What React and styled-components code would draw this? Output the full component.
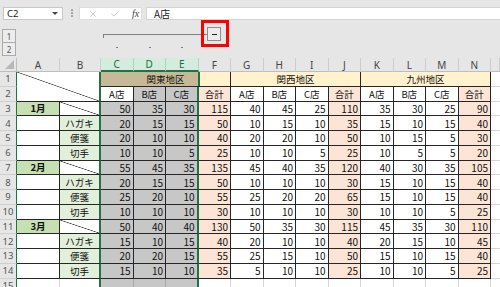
import React from 'react';
import styled, { createGlobalStyle, css } from 'styled-components';
import { X, Check } from 'lucide-react';

const GREEN = '#217346';
const LINE = '#262626';
const GRID = '#d6d6d6';
const SEL = '#c7c7c7';
const PEACH = '#fce4d6';
const YELLOW = '#fff2cc';
const TAN = '#c6b996';
const MONTH = '#c6e0b4';
const LABEL = '#e2efda';
const CHROME = '#e6e6e6';
const COLS = '17px 43px 41px repeat(12, 32.5px) 1fr';

const GlobalStyle = createGlobalStyle`
  html, body { margin: 0; padding: 0; }
  body {
    width: 500px;
    height: 287px;
    overflow: hidden;
    background: ${CHROME};
    font-family: "Noto Sans CJK JP", "Noto Sans", sans-serif;
  }
`;

const Frame = styled.div`
  display: flex;
  flex-direction: column;
  height: 287px;
  overflow: hidden;
`;

// formula bar
const FormulaRow = styled.div`
  display: flex;
  align-items: flex-start;
  height: 22px;
  flex: none;
  box-sizing: border-box;
  padding: 7px 0 0 3px;
`;

const NameBox = styled.div`
  width: 60px;
  height: 13px;
  box-sizing: border-box;
  border: 1px solid #c8c8c8;
  background: #fff;
  display: flex;
  align-items: center;
  justify-content: space-between;
  padding: 0 4px 0 3px;
  font-family: "Noto Sans", sans-serif;
  font-size: 9.5px;
  color: #222;
`;

const Caret = styled.span`
  width: 0;
  height: 0;
  border-left: 3px solid transparent;
  border-right: 3px solid transparent;
  border-top: 3px solid #444;
`;

const Grip = styled.div`
  width: 2px;
  height: 8px;
  margin: 2px 6px 0 8px;
  background: repeating-linear-gradient(to bottom, #a6a6a6 0 2px, transparent 2px 3px);
`;

const IconBox = styled.div`
  width: 63px;
  height: 13px;
  box-sizing: border-box;
  background: #fff;
  border: 1px solid #dcdcdc;
  display: flex;
  align-items: center;
  gap: 12px;
  padding-left: 8px;
  color: #a8a8a8;
`;

const Fx = styled.span`
  font-family: "Liberation Serif", serif;
  font-style: italic;
  font-size: 10px;
  color: #444;
`;

const FormulaBox = styled.div`
  flex: 1;
  height: 13px;
  margin-left: 4px;
  box-sizing: border-box;
  background: #fff;
  border: 1px solid #d4d4d4;
  border-right: none;
  display: flex;
  align-items: center;
  padding-left: 7px;
  font-size: 10px;
  color: #222;
`;

// outline (group) bar
const OutlineBar = styled.div`
  display: grid;
  grid-template-columns: ${COLS};
  height: 36px;
  flex: none;
`;

const LevelStack = styled.div`
  display: flex;
  flex-direction: column;
  padding: 7px 0 0 2px;
`;

const LevelButton = styled.div`
  width: 14px;
  height: 14px;
  box-sizing: border-box;
  border: 1px solid #ababab;
  background: #ececec;
  display: flex;
  align-items: center;
  justify-content: center;
  font-family: "Noto Sans", sans-serif;
  font-size: 8px;
  color: #555;
  & + & { margin-top: -1px; }
`;

const Spacer = styled.div`
  grid-column: span ${p => p.$span || 1};
`;

const GroupArea = styled.div`
  grid-column: span 4;
  display: flex;
  flex-direction: column;
`;

const GroupTop = styled.div`
  display: flex;
  align-items: flex-start;
  height: 25px;
  padding-left: 2px;
`;

const GroupLine = styled.div`
  flex: 1;
  height: 1px;
  margin-top: 12px;
  background: #808080;
  position: relative;
  &::before {
    content: '';
    position: absolute;
    left: 0;
    top: 0;
    width: 1px;
    height: 4px;
    background: #808080;
  }
`;

const CollapseButton = styled.div`
  position: relative;
  flex: none;
  width: 14px;
  height: 14px;
  margin: 5px 10px 0 0;
  box-sizing: border-box;
  border: 1px solid #8e8e8e;
  background: #ededed;
  display: flex;
  align-items: center;
  justify-content: center;
  &::after {
    content: '';
    width: 5px;
    height: 1px;
    background: #222;
  }
`;

const Highlight = styled.div`
  position: absolute;
  left: -7px;
  top: -8px;
  right: -9px;
  bottom: -7px;
  border: 3px solid #ff0000;
  pointer-events: none;
`;

const DotRow = styled.div`
  display: grid;
  grid-template-columns: repeat(3, 32.5px);
`;

const Dot = styled.span`
  justify-self: center;
  width: 2px;
  height: 1px;
  background: #7a7a7a;
`;

// sheet grid
const Sheet = styled.div`
  display: grid;
  grid-template-columns: ${COLS};
  grid-template-rows: 14px repeat(15, 14.75px);
  background: #fff;
  font-size: 10px;
  color: #111;
`;

const Corner = styled.div`
  position: relative;
  background: ${CHROME};
  border-right: 1px solid #bdbdbd;
  border-bottom: 1px solid #bdbdbd;
  &::after {
    content: '';
    position: absolute;
    right: 2px;
    bottom: 2px;
    border-left: 9px solid transparent;
    border-bottom: 9px solid #b8b8b8;
  }
`;

const ColHeader = styled.div`
  display: flex;
  align-items: center;
  justify-content: center;
  box-sizing: border-box;
  background: ${p => (p.$sel ? '#d3ecdd' : CHROME)};
  color: ${p => (p.$sel ? '#1d6b3e' : '#444')};
  border-right: 1px solid ${p => (p.$sel ? '#a9d8bd' : '#cdcdcd')};
  border-bottom: ${p => (p.$sel ? `2px solid ${GREEN}` : '1px solid #bdbdbd')};
  font-family: "Noto Sans", sans-serif;
  font-size: 10px;
`;

const RowHeader = styled.div`
  display: flex;
  align-items: center;
  justify-content: center;
  box-sizing: border-box;
  background: ${CHROME};
  color: #555;
  border-right: 1px solid ${GREEN};
  border-bottom: 1px solid #cfcfcf;
  font-family: "Noto Sans", sans-serif;
  font-size: 9.5px;
`;

const Cell = styled.div`
  grid-column: span ${p => p.$span || 1};
  grid-row: span ${p => p.$rows || 1};
  display: flex;
  align-items: center;
  justify-content: ${p => (p.$num ? 'flex-end' : 'center')};
  box-sizing: border-box;
  min-width: 0;
  overflow: hidden;
  white-space: nowrap;
  padding: 0 2px;
  font-size: ${p => (p.$num ? '10px' : '9.5px')};
  background-color: ${p => p.$bg || '#fff'};
  border-right: ${p => (p.$edge ? `2px solid ${GREEN}` : `1px solid ${p.$rc || LINE}`)};
  border-bottom: 1px solid ${p => p.$bc || LINE};
  font-weight: ${p => (p.$bold ? 700 : 400)};
  ${p => p.$diag && css`
    background-image: linear-gradient(to top right, transparent calc(50% - 0.7px), #4a4a4a 50%, transparent calc(50% + 0.7px));
  `}
`;

const RegionCell = styled(Cell)`
  background: ${p => (p.$tint
    ? `linear-gradient(${GREEN}, ${GREEN}) 97px 0 / 2px 100% no-repeat, linear-gradient(to right, ${TAN} 98px, ${YELLOW} 98px)`
    : YELLOW)};
`;

const Filler = styled.div`
  background: #fff;
  border-bottom: 1px solid ${GRID};
`;

const LETTERS = ['A', 'B', 'C', 'D', 'E', 'F', 'G', 'H', 'I', 'J', 'K', 'L', 'M', 'N'];
const ITEMS = ['ハガキ', '便箋', '切手'];
const DATA = [
  [50, 35, 30, 115, 40, 45, 25, 110, 35, 30, 25, 90],
  [20, 15, 15, 50, 10, 15, 10, 35, 15, 10, 15, 40],
  [20, 10, 10, 40, 20, 20, 10, 50, 10, 15, 5, 30],
  [10, 10, 5, 25, 10, 10, 5, 25, 10, 5, 5, 20],
  [55, 45, 35, 135, 45, 40, 35, 120, 40, 30, 35, 105],
  [20, 15, 15, 50, 10, 10, 10, 30, 15, 10, 15, 40],
  [25, 20, 10, 55, 25, 20, 20, 65, 15, 10, 15, 40],
  [10, 10, 10, 30, 10, 10, 10, 30, 10, 10, 5, 25],
  [50, 40, 40, 130, 50, 35, 30, 115, 45, 35, 30, 110],
  [15, 10, 15, 40, 20, 10, 10, 40, 20, 15, 10, 45],
  [20, 20, 15, 55, 25, 15, 10, 50, 15, 10, 15, 40],
  [15, 10, 10, 35, 5, 10, 10, 25, 10, 10, 5, 25],
];

const cellBg = c => (c < 3 ? SEL : c % 4 === 3 ? PEACH : '#fff');

function ShopRow() {
  return ['A店', 'B店', 'C店', '合計', 'A店', 'B店', 'C店', '合計', 'A店', 'B店', 'C店', '合計'].map((t, c) => (
    <Cell key={c} $bg={c === 0 ? '#fff' : cellBg(c)} $edge={c === 2}>{t}</Cell>
  ));
}

function DataRow({ values, index }) {
  const month = index % 4 === 0;
  return (
    <>
      <RowHeader>{index + 3}</RowHeader>
      {month
        ? <Cell $bg={MONTH} $bold>{index / 4 + 1}月</Cell>
        : <Cell />}
      {month
        ? <Cell $diag $edge />
        : <Cell $bg={LABEL} $edge>{ITEMS[(index % 4) - 1]}</Cell>}
      {values.map((v, c) => (
        <Cell key={c} $num $bg={cellBg(c)} $edge={c === 2}>{v}</Cell>
      ))}
      <Filler />
    </>
  );
}

function App() {
  return (
    <Frame>
      <GlobalStyle />
      <FormulaRow>
        <NameBox>C2<Caret /></NameBox>
        <Grip />
        <IconBox>
          <X size={10} strokeWidth={1.5} />
          <Check size={10} strokeWidth={1.5} />
          <Fx>fx</Fx>
        </IconBox>
        <FormulaBox>A店</FormulaBox>
      </FormulaRow>

      <OutlineBar>
        <LevelStack>
          <LevelButton>1</LevelButton>
          <LevelButton>2</LevelButton>
        </LevelStack>
        <Spacer $span={2} />
        <GroupArea>
          <GroupTop>
            <GroupLine />
            <CollapseButton>
              <Highlight />
            </CollapseButton>
          </GroupTop>
          <DotRow>
            <Dot />
            <Dot />
            <Dot />
          </DotRow>
        </GroupArea>
      </OutlineBar>

      <Sheet>
        <Corner />
        {LETTERS.map((l, i) => (
          <ColHeader key={l} $sel={i >= 2 && i <= 4}>{l}</ColHeader>
        ))}
        <ColHeader />

        <RowHeader>1</RowHeader>
        <Cell $span={2} $rows={2} $diag $edge />
        <RegionCell $span={4} $tint>関東地区</RegionCell>
        <RegionCell $span={4}>関西地区</RegionCell>
        <RegionCell $span={4}>九州地区</RegionCell>
        <Filler />

        <RowHeader>2</RowHeader>
        <ShopRow />
        <Filler />

        {DATA.map((values, i) => (
          <DataRow key={i} values={values} index={i} />
        ))}

        <RowHeader>15</RowHeader>
        <Cell $rc={GRID} $bc={GRID} />
        <Cell $edge $bc={GRID} />
        {LETTERS.slice(2).map((l, c) => (
          <Cell key={l} $bg={c < 3 ? SEL : '#fff'} $edge={c === 2} $rc={c < 3 ? '#a8a8a8' : GRID} $bc={GRID} />
        ))}
        <Filler />
      </Sheet>
    </Frame>
  );
}

export default App;
